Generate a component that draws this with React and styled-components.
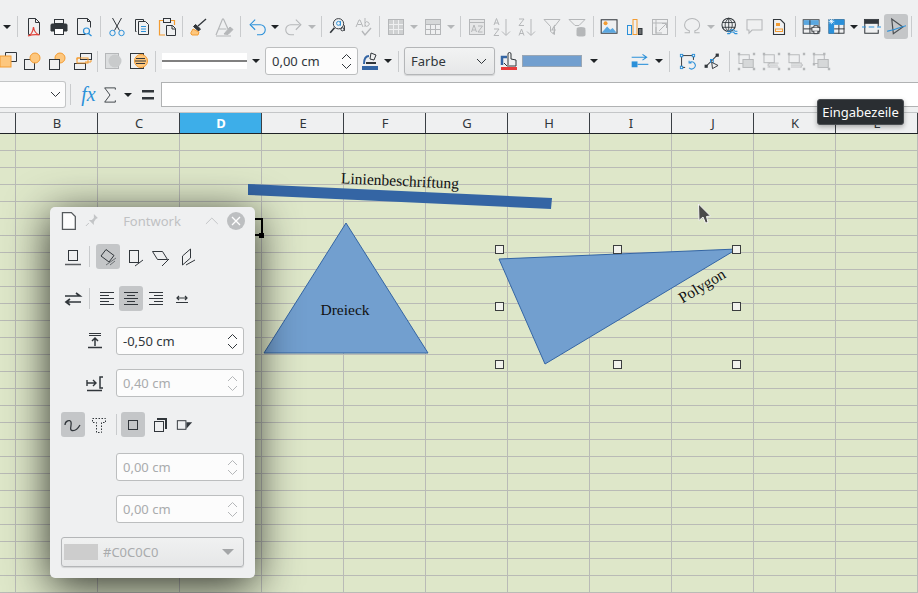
import React from 'react'
import styled, { createGlobalStyle } from 'styled-components'

const DARK = '#31363b'
const BLUE = '#2b90d9'
const ORANGE = '#f39c32'
const PEACH = '#fdc77e'
const MUTED = '#b5b7b9'

const GlobalStyle = createGlobalStyle`
  html, body {
    margin: 0;
    padding: 0;
    background: #eff0f1;
  }
  body {
    font-family: "Noto Sans", "Open Sans", sans-serif;
    font-size: 13px;
    color: ${DARK};
  }
`

const Page = styled.div`
  position: relative;
  display: flex;
  flex-direction: column;
  width: 918px;
  height: 593px;
  overflow: hidden;
  background: #eff0f1;
`

const Toolbar = styled.div`
  display: flex;
  align-items: center;
  flex: none;
  height: ${props => props.$height}px;
  margin-top: ${props => props.$top}px;
  margin-left: ${props => props.$left || 0}px;
  white-space: nowrap;
`

const ToolButton = styled.div`
  display: flex;
  flex: none;
  align-items: center;
  justify-content: center;
  width: ${props => props.$width || 25}px;
  height: 25px;
  margin-left: ${props => props.$left || 0}px;
  border-radius: 3px;
  background: ${props => (props.$active ? '#c4c6c8' : 'transparent')};
`

const Separator = styled.div`
  flex: none;
  width: 1px;
  height: 21px;
  margin-left: ${props => props.$left ?? 3}px;
  margin-right: ${props => props.$right ?? 3.5}px;
  background: #c9cbcd;
`

const DropSlot = styled.div`
  display: flex;
  flex: none;
  align-items: center;
  justify-content: center;
  width: ${props => props.$width || 12}px;
  height: 25px;

  &::after {
    content: '';
    border-left: 4px solid transparent;
    border-right: 4px solid transparent;
    border-top: 4px solid ${props => (props.$muted ? MUTED : '#1f2326')};
  }
`

const LineStyle = styled.div`
  display: flex;
  flex: none;
  align-items: center;
  width: 85px;
  height: 16px;
  margin-left: 3px;
  background: #fff;

  &::after {
    content: '';
    width: 100%;
    height: 2px;
    background: #808080;
  }
`

const SpinBox = styled.div`
  position: relative;
  display: flex;
  flex: none;
  align-items: center;
  box-sizing: border-box;
  width: ${props => props.$width}px;
  height: 28px;
  padding-left: 6px;
  border: 1px solid #bcbebf;
  border-radius: 3px;
  background: #fcfcfc;
  color: ${props => (props.$disabled ? '#a9abad' : DARK)};
`

const SpinArrows = styled.svg`
  position: absolute;
  right: 5px;
  top: 5px;
  width: 11px;
  height: 17px;
  fill: none;
  stroke: ${props => (props.$disabled ? '#b5b7b9' : DARK)};
  stroke-width: 1;
`

const SelectBox = styled.div`
  display: flex;
  flex: none;
  align-items: center;
  justify-content: space-between;
  box-sizing: border-box;
  width: 91px;
  height: 28px;
  margin-left: 5px;
  padding: 0 7px 0 6px;
  border: 1px solid #b4b6b8;
  border-radius: 3px;
  background: linear-gradient(#f2f3f3, #e6e7e8);
  box-shadow: 0 1px 1px rgba(0, 0, 0, 0.12);
`

const ColorBar = styled.div`
  flex: none;
  box-sizing: border-box;
  width: 60px;
  height: 12px;
  background: #729fcf;
  border: 1px solid #9aa7b5;
`

const NameBox = styled.div`
  display: flex;
  flex: none;
  align-items: center;
  justify-content: flex-end;
  box-sizing: border-box;
  width: 66px;
  height: 27px;
  padding-right: 4px;
  border: 1px solid #c3c5c6;
  border-left: none;
  border-radius: 0 3px 3px 0;
  background: #fcfcfc;
`

const FxLabel = styled.div`
  flex: none;
  width: 25px;
  margin-left: -1px;
  text-align: center;
  font-family: "Liberation Serif", serif;
  font-size: 20px;
  font-style: italic;
  color: ${BLUE};
`

const FormulaInput = styled.div`
  flex: 1;
  box-sizing: border-box;
  height: 25px;
  margin-left: 2px;
  border: 1px solid #b0b2b3;
  border-right: none;
  background: #fff;
`

const ColumnHeader = styled.div`
  display: grid;
  flex: none;
  grid-template-columns: 16px repeat(11, 82px);
  height: 22px;
  margin-top: 4px;
  box-sizing: border-box;
  border-top: 1px solid #c4c6c8;
  border-bottom: 1px solid #1f2326;
`

const ColumnCell = styled.div`
  display: flex;
  align-items: center;
  justify-content: center;
  padding-left: 1px;
  border-right: 1px solid #3a3f44;
  background: ${props => (props.$active ? '#3daee9' : 'transparent')};
  color: ${props => (props.$active ? '#fff' : DARK)};
  font-weight: ${props => (props.$active ? 700 : 400)};
  font-size: 13px;
`

const Sheet = styled.div`
  position: relative;
  flex: 1;
  background-color: #dee7c9;
  background-image:
    linear-gradient(to right, transparent 81px, #b9bbb6 81px),
    linear-gradient(to bottom, transparent 16px, #b9bbb6 16px);
  background-size: 82px 100%, 100% 17px;
  background-position: -66px 0, 0 0;
`

const Drawing = styled.svg`
  position: absolute;
  inset: 0;
  width: 918px;
  height: 459px;
`

const ShapeLabel = styled.text`
  font-family: "Liberation Serif", serif;
  font-size: ${props => props.$size || 15.5}px;
  fill: #111;
`

const Tooltip = styled.div`
  position: absolute;
  left: 817px;
  top: 99px;
  box-sizing: border-box;
  width: 87px;
  height: 26px;
  border: 1px solid #4a4e52;
  border-radius: 3px;
  background: #2a2e32;
  color: #fcfcfc;
  font-size: 13px;
  line-height: 24px;
  text-align: center;
  box-shadow: 0 2px 5px rgba(0, 0, 0, 0.3);
`

const Panel = styled.div`
  position: absolute;
  left: 50px;
  top: 207px;
  display: flex;
  flex-direction: column;
  box-sizing: border-box;
  width: 205px;
  height: 371px;
  padding: 0 11px;
  border-radius: 5px;
  background: #eff0f1;
  box-shadow: 0 8px 44px rgba(0, 0, 0, 0.8);
`

const TitleBar = styled.div`
  display: flex;
  flex: none;
  align-items: center;
  height: 28px;
  margin: 0 -1px 0 -2px;
`

const TitleText = styled.div`
  width: 94px;
  margin-left: 1px;
  text-align: center;
  color: #bfc1c3;
  font-size: 13px;
`

const CloseButton = styled.div`
  display: flex;
  align-items: center;
  justify-content: center;
  width: 18px;
  height: 18px;
  margin-left: 1px;
  border-radius: 50%;
  background: #bdbfc1;
`

const PanelRow = styled.div`
  display: flex;
  flex: none;
  align-items: center;
  gap: ${props => props.$gap || 0}px;
  height: 25px;
  margin-top: ${props => props.$top}px;
`

const FieldRow = styled.div`
  display: flex;
  flex: none;
  align-items: center;
  height: 28px;
  margin-top: ${props => props.$top}px;
`

const FieldIcon = styled.div`
  display: flex;
  flex: none;
  align-items: center;
  justify-content: flex-end;
  width: 55px;
  padding-right: 10px;
  box-sizing: border-box;
`

const ColorSelect = styled.div`
  display: flex;
  flex: none;
  align-items: center;
  box-sizing: border-box;
  height: 30px;
  margin-top: 14px;
  padding: 0 9px 0 2px;
  border: 1px solid #b4b6b8;
  border-radius: 3px;
  background: linear-gradient(#f0f1f1, #e6e7e8);
  box-shadow: 0 1px 1px rgba(0, 0, 0, 0.12);
  color: #a9abad;
`

const Swatch = styled.div`
  width: 34px;
  height: 16px;
  margin-right: 5px;
  background: #cdcdcd;
`

const SelectCaret = styled.div`
  margin-left: auto;
  border-left: 6px solid transparent;
  border-right: 6px solid transparent;
  border-top: 6px solid #a4a6a8;
`

// grid is the drawing space of the icon, px what it takes on screen
const Icon = ({ grid = 22, px, children }) => {
  const shown = px || (grid === 24 ? 19 : grid)
  return (
    <svg width={shown} height={shown} viewBox={`0 0 ${grid} ${grid}`} fill="none" stroke={DARK} strokeWidth="1">
      {children}
    </svg>
  )
}

const toolIcons = {
  pdf: (
    <Icon>
      <path d="M5.500 2.500h7l4 4v12h-2 M5.500 2.500v16h2 M12.500 2.500v4h4" stroke={DARK} />
      <path d="M5 20c3-1 5-5 5.500-9 .5 4 3 7 6 8-3-.5-7-.5-11.500 1z" stroke="#e0443c" strokeWidth="1.200" />
    </Icon>
  ),
  print: (
    <Icon>
      <rect x="6.500" y="3.500" width="9" height="4" />
      <path d="M3 9a1 1 0 0 1 1-1h14a1 1 0 0 1 1 1V15h-3v-2.500H6V15H3z" fill={DARK} />
      <rect x="6.500" y="12.500" width="9" height="6" fill="#fff" />
    </Icon>
  ),
  preview: (
    <Icon>
      <path d="M4.500 2.500h10l3 3v6 M4.500 2.500v16h8 M14.500 2.500v3h3" />
      <circle cx="13.500" cy="15" r="3" stroke={BLUE} strokeWidth="1.200" />
      <path d="M15.500 17.500l3 2.500" stroke={BLUE} strokeWidth="1.300" />
    </Icon>
  ),
  cut: (
    <Icon>
      <path d="M6.500 2l7 12.500M15.500 2l-7 12.500" />
      <circle cx="6.500" cy="17" r="2.700" stroke={BLUE} />
      <circle cx="15.500" cy="17" r="2.700" stroke={BLUE} />
    </Icon>
  ),
  copy: (
    <Icon>
      <path d="M5.500 15.500h-1v-12h8v1.500" />
      <path d="M7.500 5.500h7l3 3v10h-10z" fill="#eff0f1" />
      <path d="M10 10.500h5M10 13h5M10 15.500h5" stroke={BLUE} />
    </Icon>
  ),
  paste: (
    <Icon>
      <path d="M8 4.500H3.500v14.500H9 M14 4.500h4.500V9" stroke={ORANGE} strokeWidth="1.200" />
      <rect x="7.500" y="2.500" width="7" height="4" fill="#eff0f1" />
      <path d="M10.500 9.500h6l3 3v7h-9z" fill="#eff0f1" />
      <path d="M16 9.500v3.500h3.500" />
    </Icon>
  ),
  clone: (
    <Icon>
      <path d="M10 10L18 3" stroke={DARK} strokeWidth="1.300" />
      <path d="M7.500 8.500l5 4.500-2 2-5-4.500z" fill={DARK} stroke={DARK} />
      <path d="M5 13l6 3-1 3H4a2 2 0 0 1-1-2.500z" fill={PEACH} stroke={ORANGE} />
    </Icon>
  ),
  clear: (
    <Icon>
      <path d="M3 19L9.500 3h1l4.500 10M6 13h7.500" stroke={MUTED} strokeWidth="1.200" />
      <path d="M11 18l6-7 3 2.500-5 5z" fill={MUTED} stroke={MUTED} />
      <path d="M3 20h15" stroke={MUTED} />
    </Icon>
  ),
  undo: (
    <Icon grid={24} px={22}>
      <path d="M6 9.500h9.500a5.500 5.500 0 0 1 0 11H12 M10 4L4.500 9.500 10 15" stroke={BLUE} strokeWidth="1.200" />
    </Icon>
  ),
  redo: (
    <Icon grid={24} px={22}>
      <path d="M18 9.500H8.500a5.500 5.500 0 0 0 0 11H12 M14 4l5.500 5.500L14 15" stroke={MUTED} strokeWidth="1.200" />
    </Icon>
  ),
  find: (
    <Icon grid={24}>
      <circle cx="12" cy="8.500" r="6.500" strokeWidth="1.200" />
      <path d="M7 13.500L1.500 20" strokeWidth="2" />
      <circle cx="12" cy="8" r="2.500" stroke={BLUE} strokeWidth="1.200" />
      <path d="M14.500 5v6" stroke={BLUE} strokeWidth="1.200" />
      <circle cx="17" cy="15.500" r="2" strokeWidth="1.200" />
      <path d="M19.500 10.500v7" strokeWidth="1.200" />
    </Icon>
  ),
  spell: (
    <Icon>
      <path d="M4 11l3-7h1l3 7M5.500 8.500h4M13 2v9M13 7a2.200 2.200 0 1 1 0 2" stroke={MUTED} />
      <path d="M10 15l3 4 6-7" stroke={MUTED} strokeWidth="1.400" />
    </Icon>
  ),
  grid: (
    <Icon>
      <rect x="3.500" y="3.500" width="15" height="15" fill="#cfd1d2" stroke={MUTED} />
      <path d="M8.500 4v14M13.500 4v14M4 8.500h14M4 13.500h14" stroke="#eff0f1" />
    </Icon>
  ),
  gridAlt: (
    <Icon>
      <rect x="3.500" y="3.500" width="15" height="15" stroke={MUTED} />
      <path d="M8.500 4v14M13.500 4v14M4 8.500h14M4 13.500h14" stroke={MUTED} />
      <rect x="4" y="4" width="14" height="4" fill="#d6d8d9" stroke="none" />
    </Icon>
  ),
  az: (
    <Icon>
      <rect x="3.500" y="3.500" width="15" height="15" stroke={MUTED} fill="#e6e7e8" />
      <path d="M4 6.500h14" stroke={MUTED} />
      <path d="M5.500 16l2.500-7 2.500 7M6.300 14h3.400M12 10h4.500L12 16h4.500" stroke={MUTED} />
    </Icon>
  ),
  sortAz: (
    <Icon>
      <path d="M3 9l2.500-6.500L8 9M3.800 7h3.400M3 13h5l-5 6.500h5M15 3v16M11 15.500l4 4 4-4" stroke={MUTED} />
    </Icon>
  ),
  sortZa: (
    <Icon>
      <path d="M3 3h5l-5 6.500h5M3 19.500L5.500 13 8 19.500M3.800 17.500h3.400M15 3v16M11 15.500l4 4 4-4" stroke={MUTED} />
    </Icon>
  ),
  filter: (
    <Icon>
      <path d="M3 3.500h16l-5.500 7v8l-4-3v-5z" stroke={MUTED} />
      <path d="M14 9l-3 5h3l-2 4" stroke={MUTED} strokeWidth="1.200" />
    </Icon>
  ),
  filterDb: (
    <Icon>
      <path d="M3 3.500h16l-6 6H9z" stroke={MUTED} />
      <ellipse cx="15" cy="13" rx="4.500" ry="2" fill={MUTED} stroke="none" />
      <path d="M10.500 14v5c0 1 2 1.500 4.500 1.500s4.500-.5 4.500-1.500v-5" fill={MUTED} stroke="none" />
    </Icon>
  ),
  image: (
    <Icon grid={24}>
      <rect x="1.500" y="3.500" width="20" height="17" strokeWidth="1.300" />
      <path d="M2 20l7-8 4 4 3-2 5 6z" fill="#5aa7e0" stroke="none" />
      <circle cx="7" cy="8" r="2.500" fill={ORANGE} stroke="none" />
    </Icon>
  ),
  chart: (
    <Icon>
      <rect x="3.500" y="9.500" width="4" height="9" stroke={BLUE} />
      <rect x="9" y="3.500" width="4" height="15" stroke={ORANGE} />
      <rect x="14.500" y="12.500" width="3.500" height="6" fill="#6a6e71" stroke={DARK} />
    </Icon>
  ),
  pivot: (
    <Icon>
      <rect x="3.500" y="3.500" width="15" height="15" stroke={MUTED} />
      <path d="M7 4v14M4 7h14M10 15l7-7M13 7.500h4.500V12M7 11v6h6" stroke={MUTED} />
    </Icon>
  ),
  omega: (
    <Icon grid={24}>
      <path d="M2 20h6v-2.500C4 16 2 13 2 10a9.500 8 0 0 1 19 0c0 3-2 6-6 7.500V20h6" stroke={MUTED} strokeWidth="1.300" />
    </Icon>
  ),
  globe: (
    <Icon grid={24}>
      <circle cx="11" cy="10" r="8.500" strokeWidth="1.300" />
      <path d="M11 1.500v17M3 7h16M3 13h16M11 1.500c-6 5-6 12 0 17M11 1.500c6 5 6 12 0 17" strokeWidth="1.100" />
      <path d="M9 18h3l2-2h3l2 2h3M9 21h3l2 -2h3l2 2h3" stroke={BLUE} strokeWidth="1.300" />
    </Icon>
  ),
  comment: (
    <Icon grid={24}>
      <path d="M2.500 3.500h19v13H9l-4 4v-4H2.500z" stroke={MUTED} strokeWidth="1.300" />
    </Icon>
  ),
  note: (
    <Icon>
      <path d="M5.500 3.500h7l4 4v11h-11z" strokeWidth="1.100" />
      <path d="M8 7h4v3H8z" fill={ORANGE} stroke="none" />
      <rect x="7.500" y="13" width="7" height="2.500" stroke={ORANGE} />
    </Icon>
  ),
  tableForm: (
    <Icon grid={24}>
      <rect x="1.500" y="3.500" width="20" height="17" strokeWidth="1.200" />
      <rect x="2" y="4" width="19" height="6" fill="#5aa7e0" stroke="none" />
      <path d="M2 15h14M10 4v16" strokeWidth="1.200" />
      <rect x="12.500" y="13" width="10" height="5" fill="#eff0f1" strokeWidth="1.200" />
      <path d="M15 13v-2h5v2M15 18v3h5v-3" fill="#eff0f1" strokeWidth="1.200" />
    </Icon>
  ),
  tableFreeze: (
    <Icon grid={24}>
      <rect x="2.500" y="3.500" width="19" height="17" strokeWidth="1.200" />
      <rect x="2" y="3" width="7" height="18" fill={BLUE} stroke="none" />
      <rect x="9" y="3" width="13" height="7" fill={BLUE} stroke="none" />
      <path d="M9 15h13M15 10v11" strokeWidth="1.200" />
      <path d="M5.500 2v7M2 5.500h7M3 3l5 5M8 3l-5 5" stroke="#fff" />
    </Icon>
  ),
  headers: (
    <Icon grid={24}>
      <rect x="3" y="3" width="18" height="5" fill={DARK} stroke={DARK} />
      <path d="M3.500 8v12.500h17V16M20.500 8v4" strokeWidth="1.300" />
      <path d="M0 12.500h5M8.500 12.500h7M19 12.500h5" stroke={BLUE} strokeWidth="1.300" />
    </Icon>
  ),
  pointer: (
    <Icon grid={24}>
      <path d="M8 21L6 2.500 20 12.500z" stroke="#4a4e52" strokeWidth="1.500" />
      <path d="M0 18c7-1 16-5 24-7" stroke={BLUE} strokeWidth="1.300" />
    </Icon>
  ),
  overlapA: (
    <Icon>
      <path d="M9.500 6V2.500h11v9H15" />
      <rect x="4" y="6" width="11" height="11" fill={PEACH} stroke={ORANGE} />
    </Icon>
  ),
  circleOver: (
    <Icon>
      <rect x="3.500" y="9.500" width="10" height="10" />
      <circle cx="14" cy="8" r="5" fill={PEACH} stroke={ORANGE} />
    </Icon>
  ),
  circleUnder: (
    <Icon>
      <circle cx="14" cy="8" r="5" fill={PEACH} stroke={ORANGE} />
      <rect x="3.500" y="9.500" width="10" height="10" fill="#eff0f1" />
    </Icon>
  ),
  stack: (
    <Icon>
      <rect x="9.500" y="3.500" width="11" height="6" />
      <path d="M6 10V8h3M20 10v2h-6" stroke={ORANGE} />
      <rect x="3.500" y="13.500" width="11" height="6" />
      <rect x="6" y="8" width="11" height="5" stroke={ORANGE} />
    </Icon>
  ),
  imgFront: (
    <Icon>
      <rect x="2.500" y="3.500" width="13" height="15" fill="#dcdedf" stroke={MUTED} />
      <circle cx="12" cy="11" r="6.500" fill="#c9cbcc" stroke="none" />
    </Icon>
  ),
  imgBack: (
    <Icon>
      <rect x="2.500" y="3.500" width="13" height="15" />
      <circle cx="13" cy="11" r="6.500" fill={PEACH} stroke={ORANGE} />
      <path d="M8 8.500h9M7 11h11M8 13.500h9" stroke={DARK} />
    </Icon>
  ),
  fillBucket: (
    <Icon>
      <path d="M12 3l5 2-2 5-4-1z" stroke={DARK} />
      <path d="M5 14c0-5 1-8 5-8" stroke="#3465a4" strokeWidth="2" />
      <rect x="3" y="16" width="16" height="4" fill="#3465a4" stroke="none" />
      <path d="M7 13h10" stroke={DARK} strokeWidth="2" />
    </Icon>
  ),
  fillHand: (
    <Icon>
      <path d="M4 15V7h5" stroke="#3465a4" strokeWidth="2.500" />
      <path d="M10 15V4a1.500 1.500 0 0 1 3 0v5l5 1v6H9l-3-3" fill="#eff0f1" />
      <rect x="3" y="17" width="16" height="3" fill="#e83b3b" stroke="none" />
    </Icon>
  ),
  flow: (
    <Icon grid={24} px={20}>
      <path d="M2 7.500h18M15 4l5 3.500-5 3.500" stroke={BLUE} strokeWidth="1.300" />
      <path d="M9 16h13" stroke={BLUE} strokeWidth="1.300" />
      <rect x="2" y="12.500" width="7" height="7" fill={BLUE} stroke="none" />
    </Icon>
  ),
  rotate: (
    <Icon grid={24}>
      <path d="M6 4.500h12M4.500 6v12M6 19.500h3M19.500 6v4" strokeWidth="1.200" />
      <rect x="3" y="3" width="3" height="3" stroke={BLUE} strokeWidth="1.200" />
      <rect x="18" y="3" width="3" height="3" stroke={BLUE} strokeWidth="1.200" />
      <rect x="3" y="18" width="3" height="3" stroke={BLUE} strokeWidth="1.200" />
      <path d="M14 20a4.500 4.500 0 1 0 1-7M14 11v3h3" stroke={BLUE} strokeWidth="1.300" />
    </Icon>
  ),
  points: (
    <Icon grid={24}>
      <path d="M4 18L18 4" strokeWidth="1.300" />
      <rect x="2" y="16" width="4" height="4" fill={DARK} stroke="none" />
      <rect x="16" y="2" width="4" height="4" fill={DARK} stroke="none" />
      <rect x="9.500" y="9.500" width="3.500" height="3.500" stroke={BLUE} strokeWidth="1.200" />
      <path d="M11 13l8 4-7 4z" fill="#eff0f1" strokeWidth="1.200" />
    </Icon>
  ),
  group: (
    <Icon grid={24}>
      <rect x="2.500" y="3.500" width="13" height="11" stroke={MUTED} strokeWidth="1.200" />
      <rect x="7.500" y="9.500" width="13" height="10" fill="#d6d8d9" stroke={MUTED} strokeWidth="1.200" />
      <path d="M1 1h3v3H1zM20 1h3v3h-3zM1 20h3v3H1zM20 20h3v3h-3z" fill={MUTED} stroke="none" />
    </Icon>
  ),
  groupIn: (
    <Icon grid={24}>
      <rect x="2.500" y="3.500" width="13" height="10" stroke={MUTED} strokeWidth="1.200" />
      <path d="M7 14h14M7 19h14M20 16.500H8M10 14l-3 2.500 3 2.500" stroke={MUTED} />
      <path d="M1 1h3v3H1zM20 1h3v3h-3zM1 20h3v3H1zM20 20h3v3h-3z" fill={MUTED} stroke="none" />
    </Icon>
  ),
  groupOut: (
    <Icon grid={24}>
      <rect x="2.500" y="3.500" width="13" height="10" stroke={MUTED} strokeWidth="1.200" />
      <path d="M5 14h14M5 19h14M5 16.500h14M17 14l3 2.500-3 2.500" stroke={MUTED} />
      <path d="M1 1h3v3H1zM20 1h3v3h-3zM1 20h3v3H1zM20 20h3v3h-3z" fill={MUTED} stroke="none" />
    </Icon>
  ),
  ungroup: (
    <Icon grid={24}>
      <rect x="2.500" y="3.500" width="13" height="11" stroke={MUTED} strokeWidth="1.200" />
      <rect x="7.500" y="9.500" width="13" height="10" fill="#d6d8d9" stroke={MUTED} strokeWidth="1.200" />
      <path d="M1 1h3v3H1zM14 1h3v3h-3zM1 14h3v3H1zM20 20h3v3h-3z" fill={MUTED} stroke="none" />
    </Icon>
  ),

  // fontwork panel
  fwOff: (
    <Icon>
      <rect x="6.500" y="4.500" width="9" height="10" />
      <path d="M3 18.500h16" strokeWidth="1.500" stroke="#5a5e62" />
    </Icon>
  ),
  fwRotate: (
    <Icon>
      <path d="M9 3.500l8 6-5 6.500-8-6z" />
      <path d="M9 19l10-7M13 19l5-4" stroke="#6b6f72" />
    </Icon>
  ),
  fwUpright: (
    <Icon>
      <rect x="5.500" y="4.500" width="9" height="12" />
      <path d="M11 20l8-6" />
    </Icon>
  ),
  fwSlantX: (
    <Icon>
      <path d="M2.500 5.500h10l5 8h-10z" />
      <path d="M12 20l7-7" />
    </Icon>
  ),
  fwSlantY: (
    <Icon>
      <path d="M5.500 10l8-7v9l-8 7z" />
      <path d="M9 19l9-5" />
    </Icon>
  ),
  fwOrient: (
    <Icon>
      <path d="M3 8h15M14 5l4 3h-4M19 14H4M8 11l-4 3 4 3" strokeWidth="1.700" />
    </Icon>
  ),
  alignLeft: (
    <Icon>
      <path d="M4 4.500h14M4 7.500h9M4 10.500h14M4 13.500h9M4 16.500h14" />
    </Icon>
  ),
  alignCenter: (
    <Icon>
      <path d="M4 4.500h14M7 7.500h8M4 10.500h14M7 13.500h8M4 16.500h14" />
    </Icon>
  ),
  alignRight: (
    <Icon>
      <path d="M4 4.500h14M9 7.500h9M4 10.500h14M9 13.500h9M4 16.500h14" />
    </Icon>
  ),
  autosize: (
    <Icon>
      <path d="M6 10h10M8 8l-2 2 2 2M14 8l2 2-2 2M5 14.500h12" strokeWidth="1.200" />
    </Icon>
  ),
  distance: (
    <Icon>
      <path d="M5 3.500h12M5 5.500h12" />
      <path d="M11 8v8M8 11l3-3 3 3" strokeWidth="1.500" />
      <path d="M4 17.500h14" strokeWidth="1.500" />
    </Icon>
  ),
  indent: (
    <Icon>
      <path d="M3 11h9M9 8l3 3-3 3M3 8v6" strokeWidth="1.400" />
      <path d="M19 5h-3v11h3" strokeWidth="1.500" />
      <path d="M3 18.500h15" strokeWidth="1.500" />
    </Icon>
  ),
  contour: (
    <Icon>
      <path d="M3 11c0-4 5-6 6-3s-2 8 1 8.500 6-2 8-5.500" strokeWidth="1.300" />
    </Icon>
  ),
  textContour: (
    <Icon>
      <path d="M4.500 4.500h13v4h-4v10h-5v-10h-4z" strokeDasharray="1.500 1.500" />
    </Icon>
  ),
  shadowOff: (
    <Icon>
      <rect x="6.500" y="6.500" width="9" height="9" />
    </Icon>
  ),
  shadowVert: (
    <Icon>
      <rect x="5.500" y="7.500" width="9" height="10" />
      <path d="M8 5h9v10" strokeWidth="2" />
    </Icon>
  ),
  shadowSlant: (
    <Icon>
      <rect x="3.500" y="6.500" width="9" height="9" />
      <path d="M13 8h6l-6 7z" fill={DARK} stroke="none" />
    </Icon>
  ),
}

const Tool = ({ name, active, width, left }) => (
  <ToolButton $active={active} $width={width} $left={left}>{toolIcons[name]}</ToolButton>
)

const Arrows = ({ disabled }) => (
  <SpinArrows viewBox="0 0 11 17" $disabled={disabled}>
    <path d="M1 6l4.500-4.500L10 6M1 11l4.500 4.500L10 11" />
  </SpinArrows>
)

const Chevron = () => (
  <svg width="11" height="7" viewBox="0 0 11 7" fill="none" stroke={DARK}>
    <path d="M1 1l4.500 4.500L10 1" />
  </svg>
)

const TopBar = () => (
  <Toolbar $height={25} $top={14}>
    <DropSlot $width={14} />
    <Separator $left={2.5} $right={4} />
    <Tool name="pdf" /><Tool name="print" /><Tool name="preview" />
    <Separator />
    <Tool name="cut" /><Tool name="copy" /><Tool name="paste" />
    <Separator />
    <Tool name="clone" /><Tool name="clear" />
    <Separator />
    <Tool name="undo" /><DropSlot /><Tool name="redo" /><DropSlot $muted />
    <Separator />
    <Tool name="find" /><Tool name="spell" />
    <Separator />
    <Tool name="grid" /><DropSlot $muted /><Tool name="gridAlt" /><DropSlot $muted />
    <Separator />
    <Tool name="az" /><Tool name="sortAz" /><Tool name="sortZa" /><Tool name="filter" /><Tool name="filterDb" />
    <Separator />
    <Tool name="image" /><Tool name="chart" /><Tool name="pivot" />
    <Separator />
    <Tool name="omega" /><DropSlot $muted /><Tool name="globe" /><Tool name="comment" /><Tool name="note" />
    <Separator />
    <Tool name="tableForm" /><Tool name="tableFreeze" /><DropSlot $width={10} />
    <Tool name="headers" /><Tool name="pointer" active width={24} />
    <Separator $left={3} />
  </Toolbar>
)

const DrawBar = () => (
  <Toolbar $height={28} $top={8} $left={-6}>
    <Tool name="overlapA" /><Tool name="circleOver" /><Tool name="circleUnder" /><Tool name="stack" />
    <Separator />
    <Tool name="imgFront" /><Tool name="imgBack" />
    <Separator />
    <LineStyle />
    <DropSlot $width={18} />
    <SpinBox $width={93}>0,00 cm<Arrows /></SpinBox>
    <Tool name="fillBucket" width={24} />
    <DropSlot $width={12} />
    <Separator $left={4} $right={0} />
    <SelectBox>Farbe<Chevron /></SelectBox>
    <Tool name="fillHand" width={27} />
    <ColorBar />
    <DropSlot $width={24} />
    <Tool name="flow" width={28} left={20} />
    <DropSlot $width={10} />
    <Separator $left={5} $right={5} />
    <Tool name="rotate" /><Tool name="points" />
    <Separator $left={4} />
    <Tool name="group" /><Tool name="groupIn" /><Tool name="groupOut" /><Tool name="ungroup" />
  </Toolbar>
)

const FormulaBar = () => (
  <Toolbar $height={27} $top={6}>
    <NameBox><Chevron /></NameBox>
    <Separator $left={4} $right={6} />
    <FxLabel>fx</FxLabel>
    <ToolButton $width={18}>
      <svg width="16" height="20" viewBox="0 0 18 20" fill="none" stroke={DARK}>
        <path d="M15 4V2H3l6 8-6 8h12v-2" />
      </svg>
    </ToolButton>
    <DropSlot $width={18} />
    <ToolButton $width={22}>
      <svg width="14" height="10" viewBox="0 0 14 10" fill={DARK}>
        <rect x="1" y="0" width="12" height="2.500" />
        <rect x="1" y="7" width="12" height="2.500" />
      </svg>
    </ToolButton>
    <FormulaInput />
  </Toolbar>
)

const columns = ['', 'B', 'C', 'D', 'E', 'F', 'G', 'H', 'I', 'J', 'K', 'L']

const handles = [
  [499, 249], [617, 249], [736, 249],
  [499, 306], [736, 306],
  [499, 364], [617, 364], [736, 364],
]

// coordinates below are page coordinates, the viewBox skips the 134px above the sheet
const Shapes = () => (
  <Drawing viewBox="0 134 918 459">
    <path d="M255 219h7v16h-7" fill="none" stroke="#000" strokeWidth="2" />
    <rect x="259" y="233" width="5" height="5" fill="#000" />
    <polygon points="248,184 552,198 551,209 248,195" fill="#3465a4" />
    <ShapeLabel x="400" y="186" textAnchor="middle" transform="rotate(2.600 400 181)">Linienbeschriftung</ShapeLabel>
    <polygon points="346,223 264,353 428,353" fill="#729fcf" stroke="#3465a4" />
    <ShapeLabel x="345" y="315" textAnchor="middle">Dreieck</ShapeLabel>
    <polygon points="499,259 737,249 545,364" fill="#729fcf" stroke="#3465a4" />
    <ShapeLabel x="702" y="291" textAnchor="middle" transform="rotate(-31 702 286)">Polygon</ShapeLabel>
    <path d="M698.500 204l12 12-4 .5 1.500 6-2.500 .5-2.500-6-4 3.500z" fill="#4a4a4a" stroke="#f4f4f4" />
    {handles.map(([x, y]) => (
      <rect key={`${x}-${y}`} x={x - 3.5} y={y - 3.5} width="8" height="8" fill="#f1f2ec" stroke="#3a3d3e" />
    ))}
  </Drawing>
)

const FontworkPanel = () => (
  <Panel>
    <TitleBar>
      <svg width="20" height="20" viewBox="0 0 20 20" fill="#fcfcfc" stroke="#55595c" strokeWidth="1.300">
        <path d="M3.500 1.500h9l4 4v13h-13z" />
      </svg>
      <svg width="26" height="20" viewBox="0 0 24 20" fill="#c3c5c7" stroke="none">
        <path d="M14 3l4 4-2 1-2 3 0 3-5-5 3 0 2-2z" />
        <path d="M9 12l-3 3" stroke="#c3c5c7" />
      </svg>
      <TitleText>Fontwork</TitleText>
      <svg width="28" height="16" viewBox="0 0 28 16" fill="none" stroke="#c3c5c7">
        <path d="M8 11l6-6 6 6" />
      </svg>
      <CloseButton>
        <svg width="10" height="10" viewBox="0 0 10 10" stroke="#fff" strokeWidth="1.300">
          <path d="M1 1l8 8M9 1l-8 8" />
        </svg>
      </CloseButton>
    </TitleBar>
    <PanelRow $top={9} $gap={2}>
      <Tool name="fwOff" width={24} />
      <Separator $left={2} $right={4} />
      <Tool name="fwRotate" active width={24} />
      <Tool name="fwUpright" />
      <Tool name="fwSlantX" width={24} />
      <Tool name="fwSlantY" />
    </PanelRow>
    <PanelRow $top={17}>
      <Tool name="fwOrient" width={24} />
      <Separator $left={4} $right={5} />
      <Tool name="alignLeft" width={24} />
      <Tool name="alignCenter" active width={24} />
      <Tool name="alignRight" width={26} />
      <Tool name="autosize" />
    </PanelRow>
    <FieldRow $top={16}>
      <FieldIcon>{toolIcons.distance}</FieldIcon>
      <SpinBox $width={128}>-0,50 cm<Arrows /></SpinBox>
    </FieldRow>
    <FieldRow $top={14}>
      <FieldIcon>{toolIcons.indent}</FieldIcon>
      <SpinBox $width={128} $disabled>0,40 cm<Arrows disabled /></SpinBox>
    </FieldRow>
    <PanelRow $top={15}>
      <Tool name="contour" active width={24} />
      <Tool name="textContour" width={28} />
      <Separator $left={3} $right={4} />
      <Tool name="shadowOff" active width={24} />
      <Tool name="shadowVert" width={29} />
      <Tool name="shadowSlant" width={21} />
    </PanelRow>
    <FieldRow $top={16}>
      <FieldIcon />
      <SpinBox $width={128} $disabled>0,00 cm<Arrows disabled /></SpinBox>
    </FieldRow>
    <FieldRow $top={14}>
      <FieldIcon />
      <SpinBox $width={128} $disabled>0,00 cm<Arrows disabled /></SpinBox>
    </FieldRow>
    <ColorSelect>
      <Swatch />
      #C0C0C0
      <SelectCaret />
    </ColorSelect>
  </Panel>
)

function App() {
  return (
    <Page>
      <GlobalStyle />
      <TopBar />
      <DrawBar />
      <FormulaBar />
      <ColumnHeader>
        {columns.map((name, index) => (
          <ColumnCell key={index} $active={name === 'D'}>{name}</ColumnCell>
        ))}
      </ColumnHeader>
      <Sheet>
        <Shapes />
      </Sheet>
      <FontworkPanel />
      <Tooltip>Eingabezeile</Tooltip>
    </Page>
  )
}

export default App
